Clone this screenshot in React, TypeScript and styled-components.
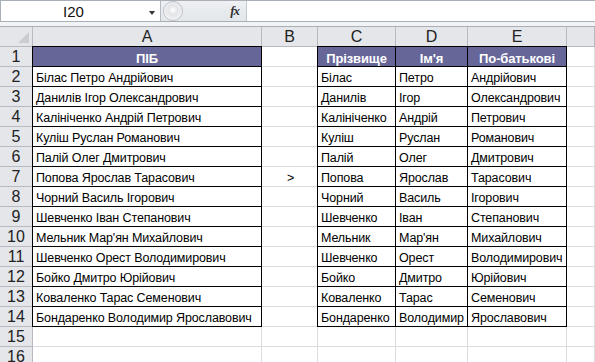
import React from 'react'
import styled, { createGlobalStyle, css } from 'styled-components'

const GlobalStyle = createGlobalStyle`
    html, body {
        margin: 0;
        padding: 0;
        background: #FFFFFF;
        overflow: hidden;
    }
    body {
        font-family: 'Liberation Sans', Arial, sans-serif;
    }
`

const people = [
    ['Білас Петро Андрійович', 'Білас', 'Петро', 'Андрійович'],
    ['Данилів Ігор Олександрович', 'Данилів', 'Ігор', 'Олександрович'],
    ['Калініченко Андрій Петрович', 'Калініченко', 'Андрій', 'Петрович'],
    ['Куліш Руслан Романович', 'Куліш', 'Руслан', 'Романович'],
    ['Палій Олег Дмитрович', 'Палій', 'Олег', 'Дмитрович'],
    ['Попова Ярослав Тарасович', 'Попова', 'Ярослав', 'Тарасович'],
    ['Чорний Василь Ігорович', 'Чорний', 'Василь', 'Ігорович'],
    ['Шевченко Іван Степанович', 'Шевченко', 'Іван', 'Степанович'],
    ["Мельник Мар'ян Михайлович", 'Мельник', "Мар'ян", 'Михайлович'],
    ['Шевченко Орест Володимирович', 'Шевченко', 'Орест', 'Володимирович'],
    ['Бойко Дмитро Юрійович', 'Бойко', 'Дмитро', 'Юрійович'],
    ['Коваленко Тарас Семенович', 'Коваленко', 'Тарас', 'Семенович'],
    ['Бондаренко Володимир Ярославович', 'Бондаренко', 'Володимир', 'Ярославович'],
]

const columns = ['A', 'B', 'C', 'D', 'E', '']

function App() {
    return (
        <Page>
            <GlobalStyle />
            <FormulaBar>
                <NameBox>
                    <span>I20</span>
                    <DropArrow />
                </NameBox>
                <FxSegment>
                    <Bump />
                    <Fx>fx</Fx>
                </FxSegment>
                <FormulaInput />
            </FormulaBar>
            <Strip />
            <Sheet>
                <Corner>
                    <CornerTriangle />
                </Corner>
                {columns.map((c, i) => (
                    <ColHeader key={i}>{c}</ColHeader>
                ))}

                <RowHeader>1</RowHeader>
                <Cell $boxed $title $center>ПІБ</Cell>
                <Cell />
                <Cell $boxed $title $center>Прізвище</Cell>
                <Cell $boxed $title $center>Ім'я</Cell>
                <Cell $boxed $title $center>По-батькові</Cell>
                <Cell />

                {people.map((p, i) => (
                    <React.Fragment key={i}>
                        <RowHeader>{i + 2}</RowHeader>
                        <Cell $boxed>{p[0]}</Cell>
                        <Cell $center>{i === 5 ? '>' : ''}</Cell>
                        <Cell $boxed>{p[1]}</Cell>
                        <Cell $boxed>{p[2]}</Cell>
                        <Cell $boxed>{p[3]}</Cell>
                        <Cell />
                    </React.Fragment>
                ))}

                {[15, 16].map((n) => (
                    <React.Fragment key={n}>
                        <RowHeader>{n}</RowHeader>
                        {columns.map((_, i) => (
                            <Cell key={i} />
                        ))}
                    </React.Fragment>
                ))}
            </Sheet>
        </Page>
    )
}

export default App

const Page = styled.div`
    width: 595px;
    height: 362px;
    overflow: hidden;
    background: #FFFFFF;
`

const FormulaBar = styled.div`
    display: flex;
    height: 22px;
    box-sizing: border-box;
    border-top: 1px solid #A9AFB7;
    border-left: 1px solid #A9AFB7;
    border-bottom: 1px solid #A9AFB7;
    background: #FFFFFF;
`

const NameBox = styled.div`
    width: 159px;
    display: flex;
    align-items: center;
    position: relative;
    box-sizing: border-box;
    font-size: 15px;
    color: #111;
    span {
        margin-left: 62px;
    }
`

const DropArrow = styled.div`
    position: absolute;
    right: 5px;
    top: 10px;
    width: 0;
    height: 0;
    border-left: 3.5px solid transparent;
    border-right: 3.5px solid transparent;
    border-top: 4px solid #333;
`

const FxSegment = styled.div`
    width: 87px;
    display: flex;
    align-items: center;
    justify-content: flex-end;
    position: relative;
    background: linear-gradient(#EEF0F3, #E3E6EA);
    border-left: 1px solid #B5BAC2;
    border-right: 1px solid #C3C8CE;
    box-sizing: border-box;
`

const Bump = styled.div`
    position: absolute;
    left: 2px;
    top: 0px;
    width: 20px;
    height: 20px;
    box-sizing: border-box;
    border-radius: 50%;
    border: 1px solid #BFC3C9;
    background: radial-gradient(circle at 50% 45%, #FFFFFF 0, #E2E4E8 35%, #F3F4F6 75%);
`

const Fx = styled.span`
    font-family: 'Liberation Serif', 'Times New Roman', serif;
    font-style: italic;
    font-weight: bold;
    font-size: 13px;
    color: #333;
    margin-right: 7px;
    letter-spacing: -1px;
`

const FormulaInput = styled.div`
    flex: 1;
    background: #FFFFFF;
`

const Strip = styled.div`
    height: 4px;
    background: #F1F3F5;
    border-bottom: 1px solid #A9AFB7;
`

const Sheet = styled.div`
    display: grid;
    grid-template-columns: 33px 229px 56px 78px 72px 99px 1fr;
    grid-auto-rows: 20px;
    font-size: 12.5px;
    letter-spacing: -0.12px;
`

const headerBase = css`
    box-sizing: border-box;
    background: #E4E6EA;
    border-right: 1px solid #B7BBC1;
    border-bottom: 1px solid #B7BBC1;
    display: flex;
    align-items: center;
    justify-content: center;
    font-size: 16px;
    letter-spacing: 0;
    color: #222;
`

const Corner = styled.div`
    ${headerBase};
    position: relative;
`

const CornerTriangle = styled.div`
    position: absolute;
    right: 3px;
    bottom: 3px;
    width: 0;
    height: 0;
    border-left: 11px solid transparent;
    border-bottom: 11px solid #C9CCD1;
`

const ColHeader = styled.div`
    ${headerBase};
`

const RowHeader = styled.div`
    ${headerBase};
    padding-top: 1px;
`

const Cell = styled.div<{ $boxed?: boolean; $title?: boolean; $center?: boolean }>`
    box-sizing: border-box;
    border-right: 1px solid #DADCDF;
    border-bottom: 1px solid #DADCDF;
    display: flex;
    align-items: center;
    justify-content: ${(p) => (p.$center ? 'center' : 'flex-start')};
    padding: 3px 0 0 2px;
    white-space: nowrap;
    overflow: hidden;
    color: #000;

    ${(p) =>
        p.$boxed &&
        css`
            position: relative;
            z-index: 1;
            margin: -1px 0 0 -1px;
            border: 1px solid #000;
            padding-left: 3px;
        `}

    ${(p) =>
        p.$title &&
        css`
            background: #666699;
            color: #FFFFFF;
            font-weight: bold;
            font-size: 13px;
            padding-left: 0;
        `}
`
